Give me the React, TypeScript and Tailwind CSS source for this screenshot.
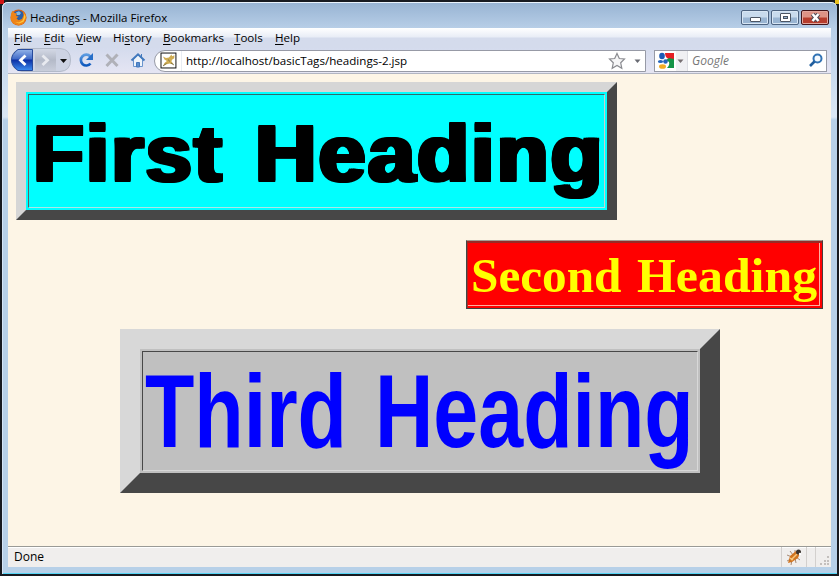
import type { ReactNode } from "react";

const menus = [
  { key: "F", rest: "ile", before: "", box: "w-[30px]" },
  { key: "E", rest: "dit", before: "", box: "w-[32px]" },
  { key: "V", rest: "iew", before: "", box: "w-[37px]" },
  { key: "s", rest: "tory", before: "Hi", box: "w-[50px]" },
  { key: "B", rest: "ookmarks", before: "", box: "w-[71px]" },
  { key: "T", rest: "ools", before: "", box: "w-[41px]" },
  { key: "H", rest: "elp", before: "", box: "w-[40px]" },
];

function FirefoxLogo() {
  return (
    <svg width="17" height="17" viewBox="0 0 17 17">
      <circle cx="8.5" cy="8.5" r="8" fill="#d9600f" />
      <circle cx="8.6" cy="7" r="5.6" fill="#2b5fa8" />
      <path d="M6 3.5 9 2.2 11 4 9.5 6 7 6z" fill="#7db8e6" />
      <path d="M1 5 2.2 1.8 4.5 4 7 4.6 6 7 8.5 7.6 6.5 9.5 8.5 11.3 12 10 13.6 6 12.8 2.6 16 6 16.2 10 13 15 8.5 16.5 3.5 14.8.7 11z" fill="#ee8418" />
      <path d="M14 4.5 15.6 8 13.5 12.8 9 14.6 5 13 9 13.4 12.5 11.5 14 8z" fill="#ffc83c" />
    </svg>
  );
}

function WindowButtons() {
  return (
    <div className="flex gap-[2px] pt-[3px]">
      <div className="flex h-[15px] w-[28px] items-end justify-center rounded-[2px] border border-[#4d6380] bg-linear-to-b from-[#c9dbed] from-45% to-[#9ab5d2] to-55% pb-[2px] shadow-[inset_0_0_0_1px_#d8e6f4]">
        <div className="h-[5px] w-[11px] rounded-[1px] border border-[#4c5563] bg-white" />
      </div>
      <div className="flex h-[15px] w-[28px] items-center justify-center rounded-[2px] border border-[#4d6380] bg-linear-to-b from-[#c9dbed] from-45% to-[#9ab5d2] to-55% shadow-[inset_0_0_0_1px_#d8e6f4]">
        <div className="flex h-[9px] w-[11px] items-center justify-center rounded-[1px] border border-[#4c5563] bg-white">
          <div className="h-[3px] w-[5px] border border-[#4c5563] bg-[#9ab5d2]" />
        </div>
      </div>
      <div className="flex h-[15px] w-[28px] items-center justify-center rounded-[2px] border border-[#431419] bg-linear-to-b from-[#de9386] from-45% to-[#b73d2d] to-55% shadow-[inset_0_0_0_1px_#e2a79d]">
        <svg width="11" height="9" viewBox="0 0 11 9">
          <path d="M2.500 1 8.500 8M8.500 1 2.500 8" stroke="#4f4a55" strokeWidth="4.4" />
          <path d="M2.500 1 8.500 8M8.500 1 2.500 8" stroke="#fff" strokeWidth="2.5" />
        </svg>
      </div>
    </div>
  );
}

function NavButtons() {
  return (
    <svg width="146" height="26" viewBox="8 48 146 26" className="shrink-0">
      <defs>
        <linearGradient id="back" x1="0" y1="0" x2="0" y2="1">
          <stop offset="0" stopColor="#94b4e8" />
          <stop offset="0.45" stopColor="#3f69c8" />
          <stop offset="0.5" stopColor="#0c2fa4" />
          <stop offset="1" stopColor="#3e8ef0" />
        </linearGradient>
        <linearGradient id="fwd" x1="0" y1="0" x2="0" y2="1">
          <stop offset="0" stopColor="#d3d8e5" />
          <stop offset="0.5" stopColor="#b4bac8" />
          <stop offset="1" stopColor="#c9cedb" />
        </linearGradient>
        <linearGradient id="glyph" x1="0" y1="0" x2="0" y2="1">
          <stop offset="0" stopColor="#5b9ae0" />
          <stop offset="1" stopColor="#0d58bd" />
        </linearGradient>
      </defs>
      <path d="M22 48.5H60Q70.500 49 70.500 60T60 71.500H22Q11.500 70 11.500 60T22 48.500z" fill="#cdd3e3" stroke="#b3bac9" />
      <path d="M35 49H56V71H35z" fill="url(#fwd)" />
      <path d="M18 49.500H32.500V70.500H18Q11.500 66 11.500 60 11.500 54 18 49.500z" fill="url(#back)" stroke="#264a9c" />
      <path d="M25.500 55.500 20.500 60.200 25.500 65" fill="none" stroke="#fff" strokeWidth="2.8" />
      <path d="M42.500 55.500 47.500 60.200 42.500 65" fill="none" stroke="#e8eaf0" strokeWidth="2.8" />
      <path d="M60 59H67L63.500 63z" fill="#111" />
      <path d="M90.300 56.500A5.400 5.400 0 1 0 90.500 63.500" fill="none" stroke="url(#glyph)" strokeWidth="2.700" />
      <path d="M93 53V60H86z" fill="#286fc8" />
      <path d="M106.500 54.500 117.500 66M117.500 54.500 106.500 66" stroke="#b0b1b8" strokeWidth="3" />
      <path d="M133.500 59V66.500H142.500V59L138 55z" fill="#eef4fb" stroke="#6a95cd" />
      <path d="M131.500 60.500 138 54.300 144.500 60.500" fill="none" stroke="#4279bd" strokeWidth="2" />
      <path d="M141.500 54V58M136.500 67V62.500H139.500V67z" fill="#5b8ecf" stroke="#4279bd" />
    </svg>
  );
}

function AddressBar() {
  return (
    <div className="flex h-[22px] w-[492px] items-center rounded-l-[11px] border border-[#979aa6] bg-white text-[11.600px]">
      <svg width="17" height="17" viewBox="0 0 17 17" className="ml-[5px]">
        <rect x="1" y="1" width="15" height="15" fill="#fff" stroke="#111" />
        <path d="M3 4.500 6 6 9 5.500 11.500 2.500 12.200 4.200 14.500 3.200 14.300 6.200 12 7.700 11.500 9.500 14 12.500 11 12 9.500 11.500 6 12.500 3 14 4.500 11 7 9 4.500 7.500z" fill="#cfac52" />
        <path d="M3 14 6.500 11.500M11 11 14 13M8 7.500 10 9.500" stroke="#67613f" strokeWidth=".8" />
      </svg>
      <div className="ml-[4px] h-[20px] w-px bg-[#e8ecf2]" />
      <span className="ml-[4px] w-[423px] whitespace-nowrap">http://localhost/basicTags/headings-2.jsp</span>
      <svg width="38" height="20" viewBox="607 50 38 20" className="shrink-0">
        <path d="M617 52.500 619.300 57.500 624.500 58 620.700 61.800 621.800 67.300 617 64.500 612.200 67.300 613.300 61.800 609.500 58 614.700 57.500z" fill="#f6f6f7" stroke="#8a8b90" strokeWidth="1.200" />
        <path d="M634.500 58.500H640.500L637.500 62z" fill="#686a72" />
      </svg>
    </div>
  );
}

function SearchBox() {
  return (
    <div className="ml-[8px] flex h-[22px] w-[173px] items-center border border-[#979aa6] bg-white">
      <svg width="34" height="20" viewBox="655 50 34 20" className="shrink-0">
        <rect x="676" y="50" width="12" height="20" fill="#f0f0f3" />
        <path d="M665 52H674V58H669Q665 57 665 52z" fill="#e51e24" />
        <path d="M674 58V67H667Q670 64 669 61L666 59 669 57z" fill="#159447" />
        <ellipse cx="662" cy="55" rx="2.800" ry="3.200" fill="#1b59b5" />
        <ellipse cx="660.500" cy="60.500" rx="2.600" ry="1.500" fill="#2464ba" />
        <ellipse cx="665.500" cy="60.500" rx="2.300" ry="2.200" fill="#2464ba" />
        <ellipse cx="662.500" cy="65.500" rx="3.500" ry="2.300" fill="#f1ad23" />
        <path d="M677.500 58.500H683.500L680.500 62z" fill="#776f72" />
        <path d="M687.500 50V70" stroke="#dcdde3" />
      </svg>
      <span className="ml-[3px] grow text-[12px] text-[#777] italic">Google</span>
      <svg width="16" height="16" viewBox="0 0 16 16" className="mr-[2px]">
        <circle cx="9.500" cy="5.500" r="4" fill="#f5faff" stroke="#3273b4" strokeWidth="2" />
        <path d="M6.500 8.500 2 13" stroke="#215e9e" strokeWidth="2.600" />
      </svg>
    </div>
  );
}

function Word({ box, shape, children }: { box: string; shape: string; children: ReactNode }) {
  return (
    <span className={`block whitespace-nowrap ${box}`}>
      <span className={`inline-block origin-left ${shape}`}>{children}</span>
    </span>
  );
}

export default function App() {
  return (
    <div className="h-[576px] w-[839px] overflow-hidden bg-[#171a20] bg-[linear-gradient(90deg,#d01414_0_4px,#171a20_4px_835px,#e8c020_835px)] bg-size-[100%_4px] bg-no-repeat p-[2px] font-['Open_Sans','Noto_Sans',sans-serif] text-[12px] text-black">
      <div className="flex h-[572px] w-[835px] flex-col rounded-t-[6px] bg-[linear-gradient(180deg,#98b4d3_0,#b7cee7_26px,#dbe7f4_115px,#b7d0e8_118px)] px-[6px] pb-[6px] shadow-[inset_0_1px_#e9f3fc,inset_1px_0_#d5e5f6,inset_0_-1px_#55d5f5]">
        <header className="-mx-[5px] mt-px flex h-[25px] shrink-0 items-center justify-between rounded-t-[5px] bg-linear-to-b from-[#98b4d3] to-[#b7cee7] pr-[7px] pl-[7px]">
          <div className="flex items-center gap-[3px] pt-[3px]">
            <FirefoxLogo />
            <span className="pt-px text-[11.500px] whitespace-nowrap">Headings - Mozilla Firefox</span>
          </div>
          <WindowButtons />
        </header>
        <nav className="flex h-[20px] shrink-0 items-center bg-linear-to-b from-white via-[#e8edf6] via-45% to-[#d4dbec] to-50% pl-[6px] text-[11.600px]">
          {menus.map((m) => (
            <span key={m.before + m.key} className={m.box}>
              {m.before}
              <span className="underline underline-offset-2">{m.key}</span>
              {m.rest}
            </span>
          ))}
        </nav>
        <div className="flex h-[26px] shrink-0 items-center border-b border-[#b1b5c2] bg-linear-to-b from-[#d4dbed] to-[#e5e5f3]">
          <NavButtons />
          <AddressBar />
          <SearchBox />
        </div>
        <main className="flex h-[472px] shrink-0 flex-col bg-[#fdf5e6] pt-[8px] pr-[8px] pl-[8px]">
          <h1 className="h-[138px] w-[601px] border-[10px] border-t-[#d6d6d6] border-r-[#474747] border-b-[#474747] border-l-[#d6d6d6] bg-[#00ffff] bg-clip-padding p-[2px]">
            <span className="flex h-[114px] w-[577px] border border-t-[#36686a] border-r-[#c9cfcf] border-b-[#aee5e5] border-l-[#5b6464] pl-[4px] font-['Liberation_Sans',Arial,sans-serif] text-[79px] leading-[118px] font-bold tracking-[1.7px] text-black [text-shadow:-2px_-1px,2px_-1px,-2px_1px,2px_1px,-2px_0,2px_0,0_-1px,0_1px]">
              <Word box="w-[222px]" shape="scale-x-[1.06]">First</Word>
              <Word box="w-[345px]" shape="scale-x-[1.08]">Heading</Word>
            </span>
          </h1>
          <h2 className="mt-[20px] h-[69px] w-[357px] self-end border border-t-[#a49c94] border-r-[#4c3a38] border-b-[#41413e] border-l-[#3d4948] bg-[#ff0000]">
            <span className="block h-[67px] w-[355px] border-t-2 border-t-[#982b27] border-l border-l-[#b32420] pr-[2px] pb-[2px]">
              <span className="flex h-[63px] w-[352px] border-r border-b border-[#ffb0a0] pl-[3px] font-['Liberation_Serif','Times_New_Roman',serif] text-[49px] leading-[65px] font-bold text-[#ffff00]">
                <Word box="w-[166px]" shape="scale-x-[1.005]">Second</Word>
                <Word box="w-[182px]" shape="scale-x-[1.018]">Heading</Word>
              </span>
            </span>
          </h2>
          <h3 className="mt-[20px] ml-[104px] h-[164px] w-[600px] border-[20px] border-t-[#d8d8d8] border-r-[#474747] border-b-[#474747] border-l-[#d8d8d8] bg-[#c0c0c0] bg-clip-padding p-[2px]">
            <span className="flex h-[120px] w-[556px] border border-t-[#484848] border-r-[#d8d8d8] border-b-[#d8d8d8] border-l-[#484848] pl-[2px] font-['Liberation_Sans',Arial,sans-serif] text-[104.500px] leading-[117px] font-bold text-[#0000ff]">
              <Word box="w-[230px]" shape="scale-x-[0.773]">Third</Word>
              <Word box="w-[320px]" shape="scale-x-[0.773]">Heading</Word>
            </span>
          </h3>
        </main>
        <footer className="flex h-[21px] shrink-0 items-stretch border-t border-[#9a9a96] bg-[#f0eeed] shadow-[inset_0_1px_#fff]">
          <span className="flex grow items-center pl-[6px]">Done</span>
          <div className="flex w-[25px] items-center justify-center border-l border-[#d3d0ce]">
            <svg width="18" height="18" viewBox="0 0 18 18">
              <path d="M5 3 8 7M2 7 7 9M2 13 6 11M6 17 7 12M11 15 10 10M15 12 11 9M10 2 10 6" stroke="#a88c76" strokeWidth="1" />
              <path d="M3 15 5 8 11 3 15 5 13 10 7 14z" fill="#d17420" />
              <path d="M6 12 12 6M5 10 8 12" stroke="#f6c77d" strokeWidth="1.500" />
              <circle cx="13.500" cy="4" r="2.500" fill="#39332f" />
              <circle cx="15" cy="6" r="1.200" fill="#fff" />
            </svg>
          </div>
          <div className="w-[9px] border-l border-[#d3d0ce]" />
          <div className="flex w-[16px] items-end justify-end border-l border-[#d3d0ce] p-px">
            <svg width="10" height="10" viewBox="0 0 10 10" fill="#c3bfbd">
              <path d="M7 0h2v2H7zM4 4h2v2H4zM7 4h2v2H7zM0 7h2v2H0zM4 7h2v2H4zM7 7h2v2H7z" />
            </svg>
          </div>
        </footer>
      </div>
    </div>
  );
}
